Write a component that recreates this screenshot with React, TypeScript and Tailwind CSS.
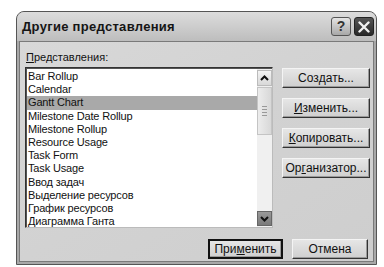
import React from "react";

const items = [
  "Bar Rollup",
  "Calendar",
  "Gantt Chart",
  "Milestone Date Rollup",
  "Milestone Rollup",
  "Resource Usage",
  "Task Form",
  "Task Usage",
  "Ввод задач",
  "Выделение ресурсов",
  "График ресурсов",
  "Диаграмма Ганта",
];

function Btn({ children, w, bold }: { children: React.ReactNode; w: string; bold?: boolean }) {
  return (
    <div
      className={`${w} h-[20px] flex items-center justify-center text-[12px] text-[#111] bg-gradient-to-b from-[#e6e6e6] to-[#cfcfcf] border ${
        bold ? "border-[#111] border-2" : "border-t-[#f4f4f4] border-l-[#f4f4f4] border-r-[#333] border-b-[#333]"
      } shadow-[inset_-1px_-1px_0_#9a9a9a]`}
    >
      {children}
    </div>
  );
}

export default function App() {
  return (
    <div
      className="w-[384px] h-[267px] bg-white pt-[11px] pl-[16px] overflow-hidden"
      style={{ fontFamily: '"Liberation Sans", Arial, sans-serif' }}
    >
      <div className="w-[361px] h-[254px] border border-[#555] rounded-t-[8px] bg-[#a8a8a8] flex flex-col">
        <div className="h-[29px] shrink-0 flex items-center pl-[5px] pr-[2px] rounded-t-[7px] bg-gradient-to-b from-[#dcdcdc] via-[#cdcdcd] to-[#bdbdbd]">
          <div className="flex-1 text-[13px] font-bold text-[#151515] tracking-[0.3px]">Другие представления</div>
          <div className="flex gap-[3px]">
            <div className="w-[20px] h-[19px] rounded-[3px] border border-[#555] bg-gradient-to-b from-[#e4e4e4] to-[#a8a8a8] flex items-center justify-center text-[14px] font-bold text-[#333]">
              ?
            </div>
            <div className="w-[20px] h-[19px] rounded-[3px] border border-[#222] bg-gradient-to-b from-[#555] to-[#2a2a2a] flex items-center justify-center">
              <svg width="12" height="12" viewBox="0 0 12 12">
                <path d="M1.5 1.5 L10.5 10.5 M10.5 1.5 L1.5 10.5" stroke="#f2f2f2" strokeWidth="2.4" strokeLinecap="round" />
              </svg>
            </div>
          </div>
        </div>
        <div className="flex-1 mx-[2px] mb-[2px] border border-[#7a7a7a] bg-gradient-to-br from-[#d8d8d8] via-[#d2d2d2] to-[#cecece] pl-[5px] pt-[8px] flex flex-col">
          <div className="h-[14px] leading-[14px] text-[11px] text-[#111] mb-[3px] ml-[1px]">
            <span className="underline">П</span>редставления:
          </div>
          <div className="flex">
            <div className="w-[248px] h-[161px] border border-[#333] border-r-[#bbb] border-b-[#bbb] bg-white flex">
              <div className="flex-1 border-l border-t border-[#555] pt-[1px]">
                {items.map((it, i) => (
                  <div
                    key={it}
                    className={`h-[13.2px] leading-[13.2px] text-[11px] tracking-[-0.15px] pl-[1px] text-[#111] ${
                      i === 2 ? "bg-[#a9a9a9]" : ""
                    }`}
                  >
                    {it}
                  </div>
                ))}
              </div>
              <div className="w-[15px] flex flex-col bg-[#f0f0f0] border-t border-[#555]">
                <div className="h-[16px] mt-[1px] border border-[#bbb] bg-gradient-to-b from-[#f4f4f4] to-[#d8d8d8] flex items-center justify-center">
                  <svg width="9" height="6" viewBox="0 0 9 6">
                    <path d="M1 5 L4.5 1.5 L8 5" stroke="#111" strokeWidth="2" fill="none" />
                  </svg>
                </div>
                <div className="h-[48px] mt-[1px] border border-[#c4c4c4] bg-gradient-to-r from-[#ececec] to-[#d8d8d8] flex flex-col items-center justify-center gap-[2px]">
                  <div className="w-[5px] h-px bg-[#999]" />
                  <div className="w-[5px] h-px bg-[#999]" />
                  <div className="w-[5px] h-px bg-[#999]" />
                  <div className="w-[5px] h-px bg-[#999]" />
                </div>
                <div className="flex-1" />
                <div className="h-[15px] mb-[1px] border border-[#666] bg-gradient-to-b from-[#9a9a9a] to-[#7a7a7a] flex items-center justify-center">
                  <svg width="9" height="6" viewBox="0 0 9 6">
                    <path d="M1 1 L4.5 4.5 L8 1" stroke="#111" strokeWidth="2" fill="none" />
                  </svg>
                </div>
              </div>
            </div>
            <div className="ml-[9px] flex flex-col gap-[10px] mt-[1px]">
              <Btn w="w-[88px]">
                Соз<span className="underline">д</span>ать...
              </Btn>
              <Btn w="w-[88px]">
                <span className="underline">И</span>зменить...
              </Btn>
              <Btn w="w-[88px]">
                <span className="underline">К</span>опировать...
              </Btn>
              <Btn w="w-[88px]">
                Ор<span className="underline">г</span>анизатор...
              </Btn>
            </div>
          </div>
          <div className="flex mt-[11px] ml-[183px] gap-[9px]">
            <Btn w="w-[75px]" bold>
              При<span className="underline">м</span>енить
            </Btn>
            <Btn w="w-[76px]">Отмена</Btn>
          </div>
        </div>
      </div>
    </div>
  );
}
